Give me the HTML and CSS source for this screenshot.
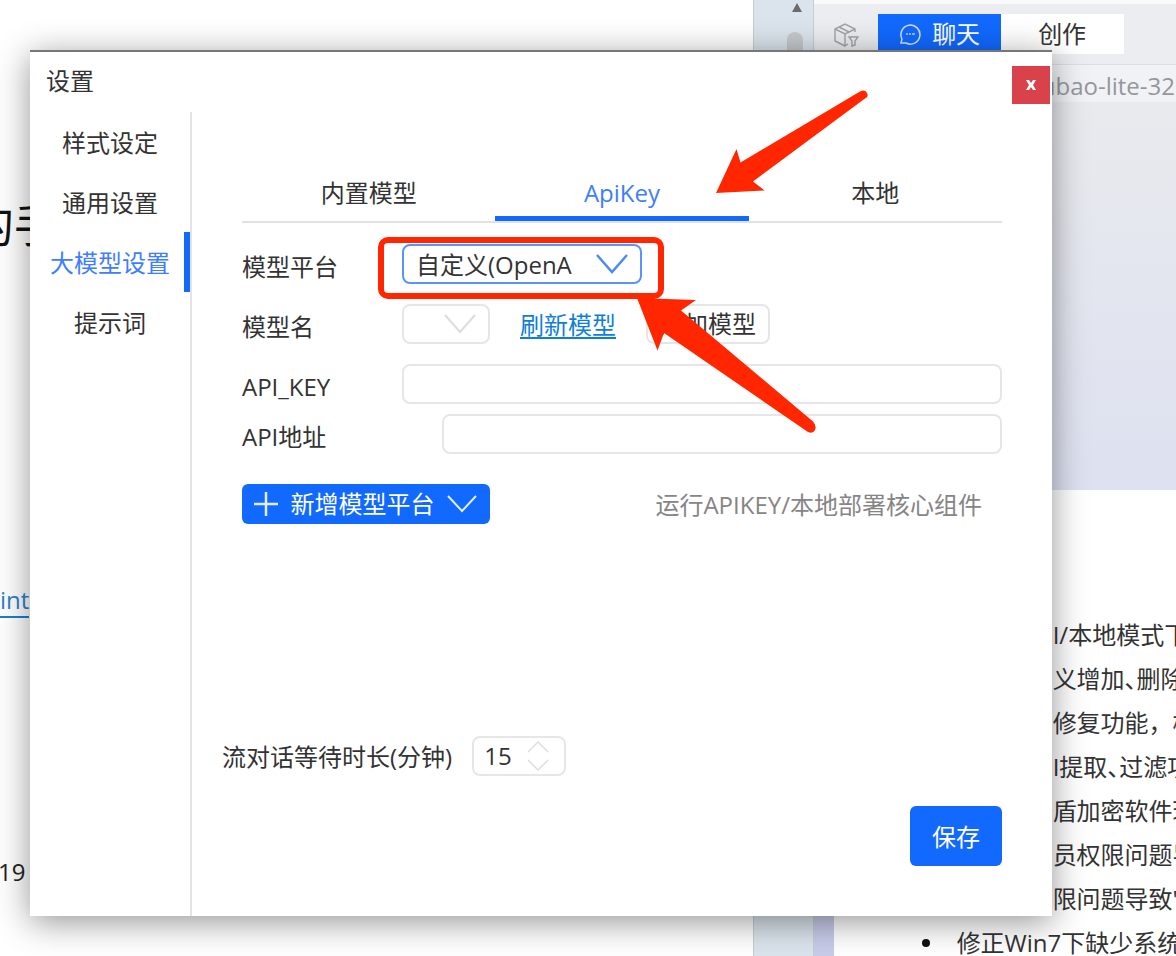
FILE: index.html
```html
<!DOCTYPE html>
<html lang="zh-CN">
<head>
<meta charset="utf-8">
<title>设置</title>
<link rel="stylesheet" href="styles.css">
</head>
<body>
<div class="desktop">
  <section class="doc">
    <h1 class="doc-title">的手</h1>
    <a class="doc-link" href="#">int</a>
    <p class="doc-num">19</p>
  </section>
  <div class="gutter">
    <svg width="12" height="9" viewBox="0 0 12 9"><path d="M6 0 11 9H1z" fill="#6b6b6b"/></svg>
    <div class="thumb"></div>
  </div>
  <section class="panel">
    <header class="panel-head">
      <svg class="cube" width="26" height="26" viewBox="0 0 26 26" fill="none" stroke="#a0a2a7" stroke-width="1.4">
        <path d="M12 24 2 19V7L12 2l10 5v3M2 7l10 5 10-5M12 12v12l3-2"/>
        <path d="M6 5l10 5M16 15h9l-3 4v4l-3 1v-5z"/>
      </svg>
      <button class="mode mode-on" type="button">
        <svg width="24" height="24" viewBox="0 0 24 24" fill="none" stroke="#cfe0ff" stroke-width="1.5"><path d="M3 21l1-4a9.500 9.500 0 1 1 4 4z"/><path d="M8 12h2M11 12h2M14 12h3" stroke="#8fb6ff" stroke-width="2"/></svg>
        聊天
      </button>
      <button class="mode" type="button">创作</button>
    </header>
    <div class="model-name">doubao-lite-32</div>
    <div class="chat"></div>
    <div class="notes">
      <ul>
        <li><span class="lead">AP</span>I/本地模式下</li>
        <li class="half-punct"><span class="lead"></span>义增加、删除</li>
        <li><span class="lead"></span>修复功能，模</li>
        <li class="half-punct"><span class="lead"></span>I提取、过滤项</li>
        <li><span class="lead"></span>盾加密软件环</li>
        <li><span class="lead"></span>员权限问题导</li>
        <li><span class="lead"></span>限问题导致"</li>
        <li>修正Win7下缺少系统</li>
      </ul>
    </div>
  </section>

  <div class="dialog" role="dialog" aria-labelledby="dlg-title">
    <header class="dialog-head">
      <h2 id="dlg-title">设置</h2>
      <button class="close" type="button" aria-label="关闭"><svg width="12" height="12" viewBox="0 0 12 12"><path d="M1 1h3l2 3 2-3h3L8 6l3 5H8L6 8l-2 3H1l3-5z" fill="#fff"/></svg></button>
    </header>
    <div class="dialog-body">
      <nav class="side">
        <a href="#">样式设定</a>
        <a href="#">通用设置</a>
        <a href="#" class="side-on">大模型设置</a>
        <a href="#">提示词</a>
      </nav>
      <form class="main">
        <div class="tabs" role="tablist">
          <button type="button" role="tab">内置模型</button>
          <button type="button" role="tab" class="tab-on" aria-selected="true">ApiKey</button>
          <button type="button" role="tab">本地</button>
        </div>
        <div class="row">
          <label for="platform">模型平台</label>
          <div class="select select-blue">
            <select id="platform"><option>自定义(OpenA</option></select>
            <svg width="32" height="22" viewBox="0 0 32 22" fill="none" stroke="#4a8bfa" stroke-width="2.500"><path d="M1 2l15 17L31 2"/></svg>
          </div>
        </div>
        <div class="row">
          <label for="model">模型名</label>
          <div class="select select-small">
            <select id="model"><option></option></select>
            <svg width="32" height="22" viewBox="0 0 32 22" fill="none" stroke="#dcdcdc" stroke-width="2"><path d="M1 2l15 17L31 2"/></svg>
          </div>
          <a class="refresh" href="#">刷新模型</a>
          <button class="add" type="button">添加模型</button>
        </div>
        <div class="row">
          <label for="key">API_KEY</label>
          <input id="key" type="text">
        </div>
        <div class="row row-tight">
          <label class="label-wide" for="url">API地址</label>
          <input id="url" type="text">
        </div>
        <div class="row row-actions">
          <button class="new" type="button">
            <svg width="24" height="24" viewBox="0 0 24 24" fill="none" stroke="#e4eeff" stroke-width="2.500"><path d="M12 0v24M0 12h24"/></svg>
            <span>新增模型平台</span>
            <svg width="30" height="20" viewBox="0 0 30 20" fill="none" stroke="#e4eeff" stroke-width="2"><path d="M1 2l14 15L29 2"/></svg>
          </button>
          <span class="hint">运行APIKEY/本地部署核心组件</span>
        </div>
        <div class="wait">
          <label for="wait">流对话等待时长(分钟)</label>
          <div class="spin">
            <input id="wait" type="number" value="15">
            <svg width="22" height="32" viewBox="0 0 22 32" fill="none" stroke="#dedede" stroke-width="1.500"><path d="M1 12 11 2l10 10M1 20l10 10 10-10"/></svg>
          </div>
        </div>
        <button class="save" type="submit">保存</button>
      </form>
    </div>
    <svg class="marks" width="500" height="360" viewBox="370 80 500 360" aria-hidden="true">
      <rect x="381" y="240" width="280" height="56" rx="7" fill="none" stroke="#ff2600" stroke-width="6"/>
      <path fill="#ff2600" d="M716 193 736.500 149 740.500 162.500 860 91.500Q865 89 867 93T865 98.500L753 181.500 764.500 190.500z"/>
      <path fill="#ff2600" d="M637 298 696 300 681 310.500 813 421.500Q817 426 815 430T808 432L664 333 657.500 350.500z"/>
    </svg>
  </div>
</div>
</body>
</html>
```
FILE: styles.css
```css
* { box-sizing: border-box; }

body {
  margin: 0;
  color: #333;
  font: 24px/36px "Open Sans", "Noto Sans CJK SC", sans-serif;
}

h1, h2, p, ul { margin: 0; padding: 0; font-weight: 400; }

button, input, select {
  font: inherit;
  color: inherit;
  margin: 0;
  padding: 0;
  border: 0;
  background: none;
}

svg { display: block; flex: none; }

.desktop {
  position: relative;
  display: flex;
  height: 100vh;
  overflow: hidden;
  background: #fff;
}

/* document behind the dialog */
.doc {
  width: 64%;
  display: flex;
  flex-direction: column;
  align-items: flex-start;
  padding-top: 192px;
  color: #222;
}
.doc-title { margin-left: -32px; font-size: 46px; line-height: 64px; color: #111; }
.doc-link { margin-top: 328px; line-height: 32px; border-bottom: 2px solid #1a7fd0; color: #2a83d0; text-decoration: none; }
.doc-num { margin: 236px 0 0 -2px; }

.gutter {
  width: 61px;
  display: flex;
  flex-direction: column;
  align-items: flex-end;
  gap: 20px;
  padding: 3px 10px 0 0;
  border: solid #c5cdd2;
  border-width: 0 1px;
  background: #dbe4ec;
}
.thumb { width: 16px; height: 400px; border-radius: 8px; background: #c5c9cd; }

/* chat panel */
.panel {
  flex: 1;
  min-width: 0;
  display: flex;
  flex-direction: column;
  border-top: 4px solid #fafafa;
  background: #ecedf1;
}
.panel-head { display: flex; height: 50px; padding: 10px 0 0 19px; }
.cube { margin: 8px 19px 0 0; }
.mode {
  display: flex;
  align-items: center;
  justify-content: center;
  gap: 10px;
  width: 123px;
  height: 40px;
  background: #fff;
}
.mode-on { background: #1169fe; color: #fff; }
.model-name {
  margin: 10px 0 0 20px;
  padding-left: 178px;
  height: 38px;
  line-height: 42px;
  border-top: 1px solid #dcdde1;
  background: #f1f2f5;
  color: #96979b;
  white-space: nowrap;
}
.chat { height: 388px; background: linear-gradient(#e9eaee, #dde1f0); }
.notes {
  flex: 1;
  min-height: 0;
  padding: 123px 0 0 88px;
  border-left: 20px solid #c8cce9;
  background: #fff;
}
.notes li {
  display: flex;
  align-items: center;
  height: 44px;
  white-space: nowrap;
  color: #333;
}
.notes li::before {
  content: "";
  flex: none;
  width: 8px;
  height: 8px;
  margin-right: 27px;
  border-radius: 50%;
  background: #111;
}
.lead { flex: none; width: 96px; text-align: right; }
.half-punct { font-feature-settings: "halt"; }

/* dialog */
.dialog {
  position: absolute;
  inset: 50px 124px 40px 30px;
  display: flex;
  flex-direction: column;
  border-top: 2px solid #777;
  background: #fff;
  box-shadow: 0 6px 32px rgba(0, 0, 0, .42);
}
.dialog-head {
  display: flex;
  justify-content: space-between;
  height: 60px;
  padding: 12px 2px 0 16px;
}
.dialog-head h2 { font-size: 24px; line-height: 34px; }
.close {
  display: flex;
  align-items: center;
  justify-content: center;
  width: 38px;
  height: 38px;
  margin-top: 2px;
  background: #d9414b;
}
.dialog-body { flex: 1; display: flex; min-height: 0; }

.side { width: 162px; border-right: 2px solid #e4e4e4; }
.side a {
  display: block;
  height: 60px;
  line-height: 62px;
  text-align: center;
  color: #333;
  text-decoration: none;
}
.side .side-on {
  color: #3f7dff;
  padding-left: 6px;
  border-right: 6px solid #1169fe;
}

.main {
  flex: 1;
  display: flex;
  flex-direction: column;
  padding: 52px 50px 50px;
}
.tabs { display: flex; margin-bottom: 21px; border-bottom: 2px solid #e2e2e2; }
.tabs button { flex: 1; height: 57px; padding-top: 6px; border-bottom: 5px solid transparent; }
.tabs .tab-on { color: #3f7dff; border-color: #1169fe; }

.row { display: flex; align-items: center; height: 40px; margin-bottom: 20px; }
.row label { width: 160px; padding-top: 5px; }
.row .label-wide { width: 200px; }
.row-tight { margin: -10px 0 30px; }
.row input { flex: 1; }
.row input, .select, .add, .spin {
  height: 40px;
  min-width: 0;
  border: 2px solid #e6e6e6;
  border-radius: 8px;
}
.select { position: relative; display: flex; }
.select select { width: 100%; padding: 2px 0 0 12px; appearance: none; line-height: 34px; }
.select svg { position: absolute; top: 7px; right: 12px; pointer-events: none; }
.select.select-blue { width: 240px; border-color: #5a94fb; }
.select-small { width: 88px; }
.refresh { margin: 0 30px; padding-top: 2px; color: #0f7fd6; text-underline-offset: 3px; text-decoration-thickness: 2px; }
.add { width: 124px; }

.row-actions { justify-content: space-between; padding-right: 20px; }
.new {
  display: flex;
  align-items: center;
  justify-content: space-between;
  width: 248px;
  height: 40px;
  padding: 0 13px 0 12px;
  border-radius: 6px;
  background: #1169fe;
  color: #fff;
}
.hint { padding-top: 2px; color: #858585; }

.wait { display: flex; align-items: center; gap: 20px; margin: auto 0 30px -20px; }
.wait label { padding-top: 2px; }
.spin { display: flex; align-items: center; width: 94px; padding: 0 15px 0 10px; }
.spin input { flex: 1; min-width: 0; appearance: textfield; }
.spin input::-webkit-inner-spin-button { display: none; }
.save { align-self: flex-end; width: 92px; height: 60px; padding-top: 2px; border-radius: 6px; background: #1169fe; color: #fff; }

/* annotations drawn over the dialog */
.marks { position: absolute; top: 28px; left: 340px; pointer-events: none; }
```
